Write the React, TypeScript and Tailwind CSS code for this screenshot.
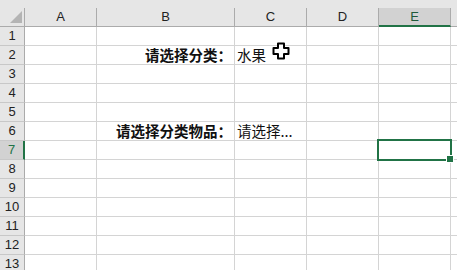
import React from 'react';

const cjk = { fontFamily: '"Noto Sans CJK SC", "Liberation Sans", sans-serif' };
const ui = { fontFamily: '"Liberation Sans", Arial, sans-serif' };

const cols = [
  { key: 'A', w: 'w-[72px]' },
  { key: 'B', w: 'w-[138px]' },
  { key: 'C', w: 'w-[72px]' },
  { key: 'D', w: 'w-[72px]' },
  { key: 'E', w: 'w-[72px]' },
];

const cells: Record<string, { text: string; bold?: boolean; right?: boolean }> = {
  B2: { text: '请选择分类：', bold: true, right: true },
  C2: { text: '水果' },
  B6: { text: '请选择分类物品：', bold: true, right: true },
  C6: { text: '请选择...' },
};

const rows = Array.from({ length: 13 }, (_, i) => i + 1);

// Excel's fat white cross pointer
const CellCursor = () => (
  <svg width="18" height="18" viewBox="0 0 18 18" className="absolute left-[272px] top-[42px]">
    <path
      d="M6 1.5h6v4.5h4.5v6h-4.5v4.5h-6v-4.5h-4.5v-6h4.5z"
      fill="#fff"
      stroke="#000"
      strokeWidth="2"
      strokeLinejoin="round"
    />
  </svg>
);

export default function App() {
  return (
    <div className="relative w-[457px] h-[270px] overflow-hidden bg-white select-none">
      {/* column headers */}
      <div className="flex h-[27px] pt-2 bg-[#e6e6e6]" style={ui}>
        <div className="relative w-[25px] shrink-0 border-r border-b border-[#ababab]">
          <svg width="12" height="12" viewBox="0 0 12 12" className="absolute left-[10px] top-[3px]">
            <path d="M12 0V12H0Z" fill="#b4b4b4" />
          </svg>
        </div>
        {cols.map((c) =>
          c.key === 'E' ? (
            <div
              key={c.key}
              className={`${c.w} shrink-0 flex items-center justify-center bg-[#d2d2d2] border-r border-[#ababab] border-b-2 border-b-[#217346] text-[13px] text-[#1e5a3a]`}
            >
              {c.key}
            </div>
          ) : (
            <div
              key={c.key}
              className={`${c.w} shrink-0 flex items-center justify-center border-r border-b border-[#ababab] text-[13px] text-[#222]`}
            >
              {c.key}
            </div>
          )
        )}
        <div className="flex-1 border-b border-[#ababab]" />
      </div>

      {/* rows */}
      {rows.map((r) => (
        <div key={r} className="flex h-[19px]">
          {r === 7 ? (
            <div
              className="w-[25px] shrink-0 flex items-center justify-center bg-[#d2d2d2] border-r-2 border-r-[#217346] border-b border-[#c8c8c8] text-[13px] text-[#217346]"
              style={ui}
            >
              {r}
            </div>
          ) : (
            <div
              className="w-[25px] shrink-0 flex items-center justify-center bg-[#e6e6e6] border-r border-r-[#ababab] border-b border-[#c8c8c8] text-[13px] text-[#222]"
              style={ui}
            >
              {r}
            </div>
          )}
          {cols.map((c) => {
            const cell = cells[c.key + r];
            return (
              <div
                key={c.key}
                className={`${c.w} shrink-0 flex items-center border-r border-b border-[#d4d4d4] px-[2px] overflow-visible whitespace-nowrap text-[14.5px] text-[#111] ${
                  cell?.right ? 'justify-end' : 'justify-start'
                } ${cell?.bold ? 'font-bold' : 'font-normal'}`}
                style={cjk}
              >
                {cell?.text}
              </div>
            );
          })}
          <div className="flex-1 border-b border-[#d4d4d4]" />
        </div>
      ))}

      {/* active cell E7 */}
      <div className="absolute left-[377px] top-[139px] w-[75px] h-[22px] border-2 border-[#217346]" />
      <div className="absolute left-[446px] top-[155px] w-[8px] h-[8px] bg-[#217346] border border-white" />

      <CellCursor />
    </div>
  );
}
